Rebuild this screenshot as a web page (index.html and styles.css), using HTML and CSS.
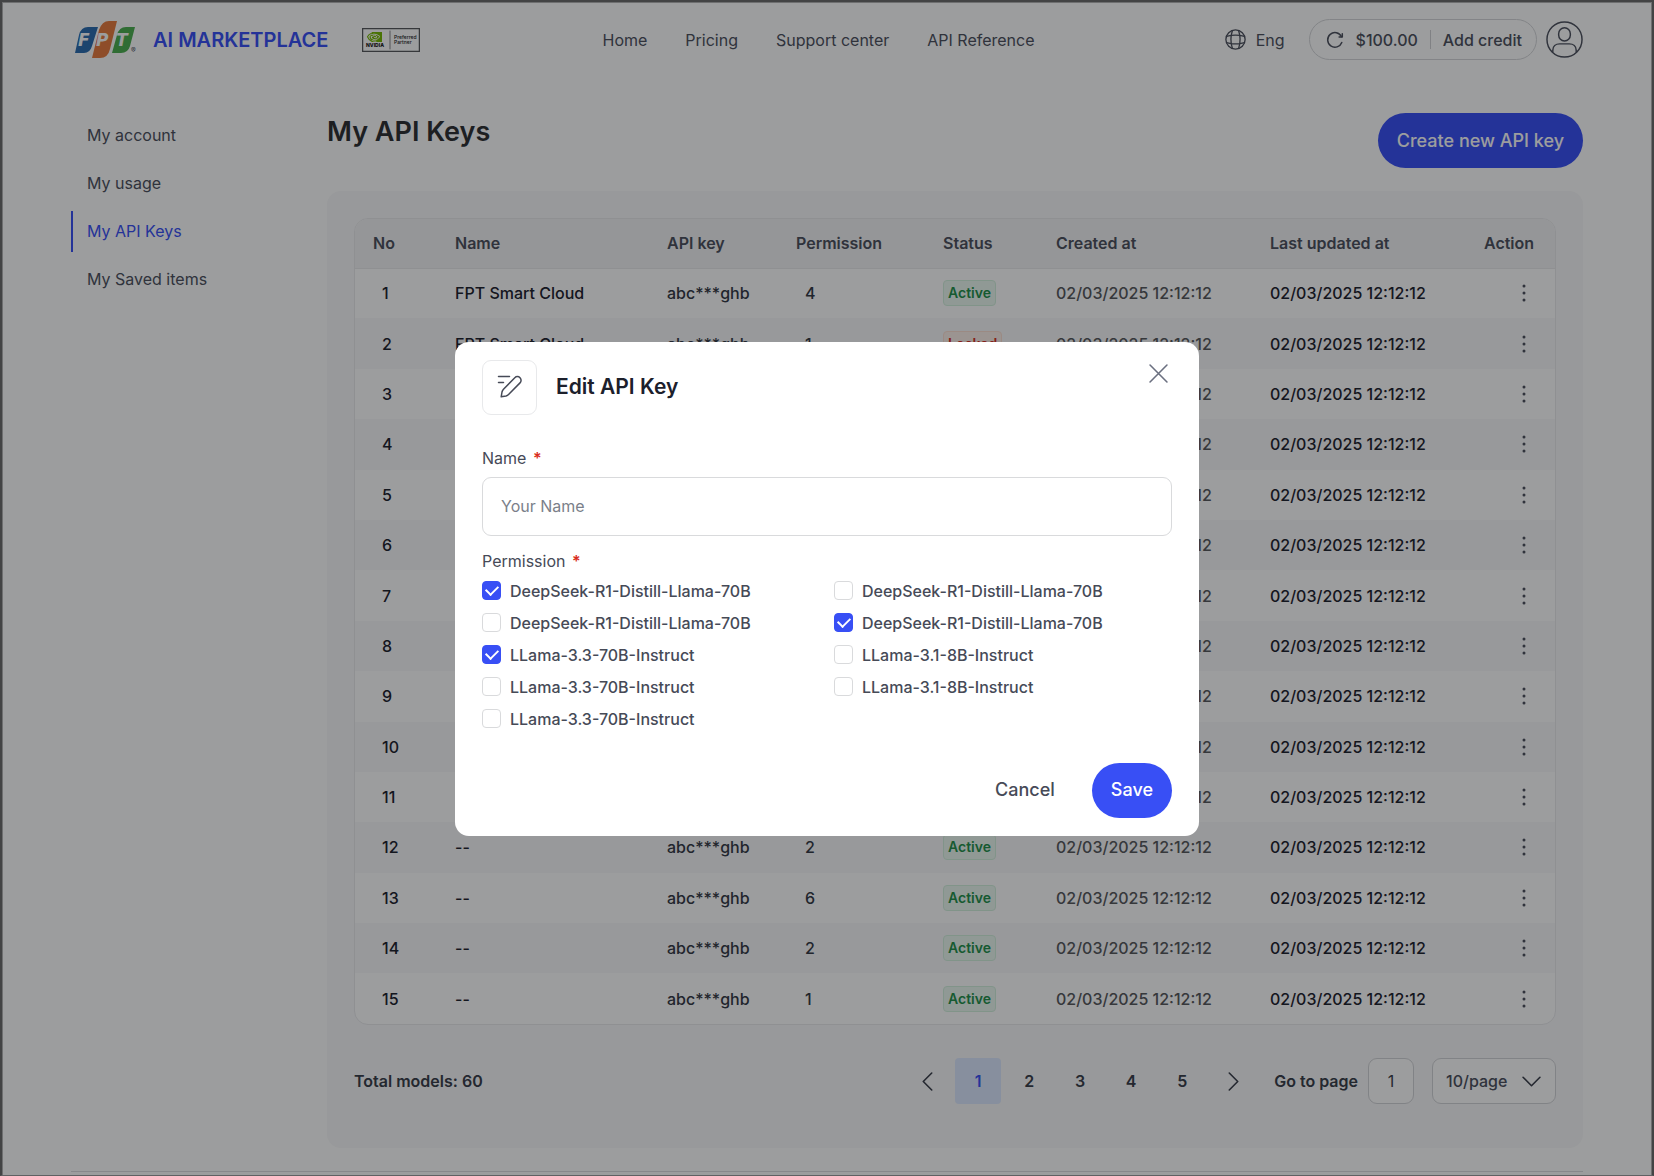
FILE: index.html
```html
<!DOCTYPE html>
<html lang="en">
<head>
<meta charset="utf-8">
<meta name="viewport" content="width=device-width, initial-scale=1">
<title>My API Keys</title>
<link rel="stylesheet" href="styles.css">
</head>
<body>
<div class="page">
  <header class="topbar">
    <div class="brand">
      <svg class="logo" viewBox="0 0 64 38" role="img" aria-label="FPT">
        <path fill="#2a6cb0" d="M0 32 4 14Q6 6 13 6H23L17 25Q15 32 9 32Z"/>
        <path fill="#4bb04f" d="M37 32 42 14Q44 6 51 6H60L55 25Q53 32 46 32Z"/>
        <path fill="#e87a3c" d="M17 37 24 9Q27 0 34 0H42L35 28Q33 37 25 37Z"/>
        <text class="logo-letter" x="3" y="25">F</text>
        <text class="logo-letter" x="21" y="25">P</text>
        <text class="logo-letter" x="41" y="25">T</text>
        <text class="logo-mark" x="56" y="32">®</text>
      </svg>
      <span class="brand-name">AI MARKETPLACE</span>
      <svg class="partner" viewBox="0 0 58 24" role="img" aria-label="NVIDIA Preferred Partner">
        <rect x=".5" y=".5" width="57" height="23" fill="none" stroke="#55575a"/>
        <path fill="#76b900" d="M10 4h10v10H10z"/>
        <path fill="none" stroke="#fff" stroke-width=".9" d="M6 8.800Q12 3.500 18 8.500Q13 14.500 9 9.500Q13 5.500 15 9Q12.500 11 12 9.200M6 8.800Q9 13.500 14 13.200"/>
        <path fill="none" stroke="#76b900" stroke-width="1.100" d="M10 5Q6.500 6.500 5.500 8.800Q7 12.500 10 13.500M10 7Q8 8 8 9Q8.500 11 10 12"/>
        <text class="partner-name" x="4" y="19">NVIDIA</text>
        <path stroke="#55575a" stroke-width=".7" d="M28 3v18"/>
        <text class="partner-text" x="32" y="11">Preferred</text>
        <text class="partner-text" x="32" y="16">Partner</text>
      </svg>
    </div>
    <nav class="nav" aria-label="Main">
      <a href="#home">Home</a>
      <a href="#pricing">Pricing</a>
      <a href="#support">Support center</a>
      <a href="#reference">API Reference</a>
    </nav>
    <div class="tools">
      <button class="lang" type="button">
        <svg viewBox="0 0 24 24" class="icon-globe" aria-hidden="true"><circle cx="12" cy="12" r="11"/><path d="M8.500 1.800c-2.300 6.600-2.300 13.800 0 20.400M15.500 1.800c2.300 6.600 2.300 13.800 0 20.400M1.800 15.500c6.600 2 13.800 2 20.400 0M1.800 8.500c6.600-2 13.800-2 20.400 0"/></svg>
        Eng
      </button>
      <div class="credit">
        <svg viewBox="0 0 18 18" class="icon-refresh" aria-hidden="true"><path d="M15.800 11.500A7.300 7.300 0 1 1 15.500 5.600"/><path d="M16.300 2.800v3.200h-3.200"/></svg>
        <span>$100.00</span>
        <span class="divider"></span>
        <a href="#credit">Add credit</a>
      </div>
      <button class="avatar" type="button" aria-label="Account">
        <svg viewBox="0 0 38 38" aria-hidden="true"><circle cx="19" cy="19" r="18"/><rect x="13" y="7" width="12" height="13.500" rx="6"/><path d="M7 31.500V30c0-4 3-6.500 7-6.500h10c4 0 7 2.500 7 6.500v1.500"/></svg>
      </button>
    </div>
  </header>

  <div class="layout">
    <nav class="sidebar" aria-label="Account">
      <a href="#account">My account</a>
      <a href="#usage">My usage</a>
      <a class="current" href="#keys" aria-current="page">My API Keys</a>
      <a href="#saved">My Saved items</a>
    </nav>
    <main class="content">
      <div class="heading">
        <h1>My API Keys</h1>
        <button class="btn btn-primary" type="button">Create new API key</button>
      </div>
      <section class="panel">
        <div class="table-wrap">
          <table>
            <colgroup><col class="c-no"><col><col class="c-key"><col class="c-perm"><col class="c-status"><col class="c-date"><col class="c-date"><col class="c-action"></colgroup>
            <thead>
              <tr><th>No</th><th>Name</th><th>API key</th><th>Permission</th><th>Status</th><th>Created at</th><th>Last updated at</th><th>Action</th></tr>
            </thead>
            <tbody id="rows"></tbody>
          </table>
        </div>
        <div class="pager">
          <span class="total">Total models: 60</span>
          <div class="pages">
            <button type="button" aria-label="Previous page"><svg viewBox="0 0 10 18" class="icon-side" aria-hidden="true"><path d="M9 1 1 9l8 8"/></svg></button>
            <button type="button" class="on" aria-current="page">1</button>
            <button type="button">2</button>
            <button type="button">3</button>
            <button type="button">4</button>
            <button type="button">5</button>
            <button type="button" aria-label="Next page"><svg viewBox="0 0 10 18" class="icon-side" aria-hidden="true"><path d="m1 1 8 8-8 8"/></svg></button>
          </div>
          <label class="total" for="goto">Go to page</label>
          <input id="goto" class="goto" type="text" value="1">
          <div class="size">
            <select aria-label="Rows per page"><option>10/page</option><option>20/page</option></select>
            <svg viewBox="0 0 18 10" class="icon-down" aria-hidden="true"><path d="m1 1 8 8 8-8"/></svg>
          </div>
        </div>
      </section>
    </main>
  </div>
  <hr class="rule">
</div>

<div class="overlay">
  <form class="modal" role="dialog" aria-modal="true" aria-labelledby="modal-title">
    <div class="modal-head">
      <span class="modal-icon"><svg viewBox="0 0 26 24" aria-hidden="true"><path d="M1.500 1.500h11M1.500 7.500h5"/><path d="M4.200 21.800 5 17Q5.300 15.500 6.500 14.200L17.800 2.700a3.500 3.500 0 0 1 5.200 5.200L11.800 19.200Q10.500 20.600 9 21Z"/></svg></span>
      <h2 id="modal-title">Edit API Key</h2>
      <button class="close" type="button" aria-label="Close"><svg viewBox="0 0 18 18" aria-hidden="true"><path d="m1 1 16 16M17 1 1 17"/></svg></button>
    </div>
    <label class="label" for="name">Name <span class="req">*</span></label>
    <input id="name" class="field" type="text" placeholder="Your Name">
    <fieldset class="perms">
      <legend class="label">Permission <span class="req">*</span></legend>
      <div class="options">
        <label><input type="checkbox" checked>DeepSeek-R1-Distill-Llama-70B</label>
        <label><input type="checkbox">DeepSeek-R1-Distill-Llama-70B</label>
        <label><input type="checkbox">DeepSeek-R1-Distill-Llama-70B</label>
        <label><input type="checkbox" checked>DeepSeek-R1-Distill-Llama-70B</label>
        <label><input type="checkbox" checked>LLama-3.3-70B-Instruct</label>
        <label><input type="checkbox">LLama-3.1-8B-Instruct</label>
        <label><input type="checkbox">LLama-3.3-70B-Instruct</label>
        <label><input type="checkbox">LLama-3.1-8B-Instruct</label>
        <label><input type="checkbox">LLama-3.3-70B-Instruct</label>
      </div>
    </fieldset>
    <div class="actions">
      <button class="btn btn-text" type="button">Cancel</button>
      <button class="btn btn-primary" type="submit">Save</button>
    </div>
  </form>
</div>
<script src="app.js"></script>
</body>
</html>
```

FILE: styles.css
```css
* {
  box-sizing: border-box;
}

body {
  margin: 0;
  background: #fff;
  color: #4b4f5c;
  font: 16px/24px Inter, "Liberation Sans", sans-serif;
}

button,
input,
select {
  font: inherit;
  color: inherit;
}

button {
  padding: 0;
  border: 0;
  background: none;
  cursor: pointer;
}

a {
  color: inherit;
  text-decoration: none;
}

h1,
h2 {
  margin: 0;
  font-weight: 600;
}

svg {
  display: block;
  fill: none;
  stroke: currentColor;
  stroke-width: 1.5;
  stroke-linecap: round;
  stroke-linejoin: round;
}

.page {
  padding: 0 71px;
}

/* Top bar */
.topbar {
  display: flex;
  align-items: center;
  justify-content: space-between;
  padding: 19px 0 18px 4px;
}

.brand {
  display: flex;
  align-items: center;
}

.logo {
  width: 64px;
  height: 38px;
  stroke: none;
}

.logo-letter {
  fill: #fff;
  font: italic 700 17px "DejaVu Sans", sans-serif;
}

.logo-mark {
  fill: #4b4f5c;
  font: 7px Inter, sans-serif;
}

.brand-name {
  margin: 0 34px 0 14px;
  color: #384ff5;
  font-size: 20px;
  font-weight: 600;
}

.partner {
  width: 58px;
  height: 24px;
  stroke: none;
}

.partner-name {
  fill: #111;
  font: 800 5px Inter, sans-serif;
}

.partner-text {
  fill: #222;
  font: 500 5px Inter, sans-serif;
}

.nav {
  display: flex;
  gap: 38px;
  margin-right: 8px;
}

.tools {
  display: flex;
  align-items: center;
}

.lang {
  display: flex;
  align-items: center;
  gap: 10px;
  margin-right: 24px;
}

.icon-globe {
  width: 21px;
  height: 21px;
}

.credit {
  display: flex;
  align-items: center;
  gap: 12px;
  height: 41px;
  margin-right: 9px;
  padding: 0 14px 0 16px;
  border: 1px solid #d5d6d9;
  border-radius: 21px;
  font-weight: 500;
}

.icon-refresh {
  width: 18px;
  height: 18px;
}

.divider {
  width: 1px;
  height: 19px;
  background: #d0d1d4;
}

.avatar svg {
  width: 37px;
  height: 37px;
}

/* Page body */
.layout {
  display: grid;
  grid-template-columns: 256px minmax(0, 1fr);
  padding-top: 35px;
}

.sidebar {
  display: flex;
  flex-direction: column;
  gap: 7px;
  padding-top: 2px;
}

.sidebar a {
  padding: 8px 0 9px 14px;
  border-left: 2px solid transparent;
}

.sidebar .current {
  border-color: #384ff5;
  color: #384ff5;
}

.heading {
  display: flex;
  justify-content: space-between;
  margin-bottom: 23px;
}

h1 {
  color: #2c2e31;
  font-size: 27px;
  line-height: 38px;
}

.btn {
  height: 55px;
  padding: 0 19px;
  border-radius: 28px;
  font-size: 18px;
  font-weight: 500;
}

.btn-primary {
  background: #384ff5;
  color: #fff;
}

.panel {
  padding: 27px 27px 44px;
  border-radius: 14px;
  background: #f9f9fa;
}

.table-wrap {
  overflow: hidden;
  border: 1px solid #e9e9ec;
  border-radius: 14px;
  background: #fff;
}

table {
  width: 100%;
  height: 805px;
  border-collapse: collapse;
  table-layout: fixed;
}

.c-no {
  width: 82px;
}

.c-key {
  width: 129px;
}

.c-perm {
  width: 147px;
}

.c-status {
  width: 113px;
}

.c-date {
  width: 214px;
}

.c-action {
  width: 89px;
}

thead tr {
  height: 49px;
  background: #f4f4f5;
}

th,
td {
  padding: 0 18px;
  text-align: left;
}

th {
  border-bottom: 1px solid #e9e9ec;
  font-weight: 600;
}

tbody tr:nth-child(even) {
  background: #f9f9fa;
}

td {
  height: 50px;
  color: #1c202c;
  font-weight: 500;
}

td:nth-child(1),
td:nth-child(4) {
  padding-left: 27px;
}

td:nth-child(3),
td:nth-child(4) {
  color: #333743;
}

td:nth-child(6) {
  color: #55575b;
}

.badge {
  display: inline-block;
  padding: 0 4px;
  border: 1px solid #d3f0dd;
  border-radius: 4px;
  background: #ecf9f1;
  color: #22904a;
  font-size: 14px;
  font-weight: 600;
}

.badge.locked {
  border-color: #fde0d2;
  background: #fef0ea;
  color: #d92d20;
}

.more {
  display: block;
  margin-left: auto;
}

.more svg {
  width: 26px;
  height: 20px;
  fill: #4b4f5c;
  stroke: none;
}

.pager {
  display: flex;
  align-items: center;
  margin-top: 33px;
  color: #383c48;
}

.total {
  font-weight: 600;
}

.pages {
  display: flex;
  gap: 5px;
  margin: 0 18px 0 auto;
}

.pages button {
  display: grid;
  place-items: center;
  width: 46px;
  height: 46px;
  border-radius: 4px;
  font-weight: 600;
}

.pages .on {
  background: #dce8ff;
  color: #384ff5;
}

.icon-side {
  width: 11px;
  height: 19px;
}

.goto {
  width: 46px;
  height: 46px;
  margin: 0 18px 0 10px;
  padding: 0;
  border: 1px solid #d3d4d8;
  border-radius: 9px;
  background: #fff;
  text-align: center;
}

.size {
  display: grid;
  align-items: center;
  width: 124px;
}

.size > * {
  grid-area: 1 / 1;
}

.size select {
  height: 46px;
  padding: 0 13px;
  border: 1px solid #d3d4d8;
  border-radius: 9px;
  background: #fff;
  color: #4b4f5c;
  font-weight: 500;
  appearance: none;
}

.icon-down {
  width: 19px;
  height: 11px;
  margin-right: 15px;
  justify-self: end;
  pointer-events: none;
}

.rule {
  height: 1px;
  margin: 23px 0 4px;
  border: 0;
  background: #dcdde0;
}

/* Dialog */
.overlay {
  position: fixed;
  inset: 0;
  display: grid;
  place-items: center;
  border: 2px solid #434445;
  border-bottom: 1px solid #606163;
  background: rgba(8, 10, 12, 0.4);
  box-shadow: inset 1px 1px #6e6f70, inset -1px 0 #6e6f70;
}

.modal {
  width: 744px;
  max-width: 100%;
  padding: 18px 27px;
  border-radius: 14px;
  background: #fff;
  color: #464a57;
}

.modal-head {
  display: flex;
  align-items: center;
  gap: 19px;
  margin-bottom: 31px;
}

.modal-icon {
  display: grid;
  place-items: center;
  width: 55px;
  height: 55px;
  border: 1px solid #e8e9eb;
  border-radius: 9px;
}

.modal-icon svg {
  width: 26px;
  height: 24px;
}

h2 {
  color: #1c202c;
  font-size: 21px;
  line-height: 28px;
}

.close {
  align-self: flex-start;
  margin: 4px 4px 0 auto;
}

.close svg {
  width: 19px;
  height: 19px;
  color: #6b7080;
}

.label {
  display: block;
  padding: 0;
}

.req {
  margin-left: 2px;
  color: #d92d20;
  font-weight: 600;
}

.field {
  display: block;
  width: 100%;
  height: 59px;
  margin: 7px 0 13px;
  padding: 0 18px;
  border: 1px solid #d9dadc;
  border-radius: 9px;
}

.field::placeholder {
  color: #7b7f8a;
  opacity: 1;
}

.perms {
  margin: 0;
  padding: 0;
  border: 0;
}

.options {
  display: grid;
  grid-template-columns: 1fr 1fr;
  gap: 8px 14px;
  padding-top: 6px;
}

.options label {
  display: flex;
  align-items: center;
  gap: 9px;
  font-weight: 500;
}

.options input {
  display: grid;
  place-items: center;
  width: 19px;
  height: 19px;
  margin: 0;
  border: 1px solid #d9dadc;
  border-radius: 4px;
  background: #fff;
  appearance: none;
}

.options input:checked {
  border-color: #384ff5;
  background: #384ff5;
}

.options input:checked::before {
  content: "";
  width: 10px;
  height: 6px;
  margin-bottom: 3px;
  border: solid #fff;
  border-width: 0 0 2px 2px;
  transform: rotate(-45deg);
}

.actions {
  display: flex;
  justify-content: flex-end;
  gap: 18px;
  margin-top: 32px;
}
```

FILE: app.js
```javascript
const keys = [
  ["FPT Smart Cloud", 4, "Active"],
  ["FPT Smart Cloud", 1, "Locked"],
  ["--", 2, "Active"],
  ["--", 2, "Active"],
  ["--", 2, "Active"],
  ["--", 2, "Active"],
  ["--", 2, "Active"],
  ["--", 2, "Active"],
  ["--", 2, "Active"],
  ["--", 2, "Active"],
  ["--", 2, "Active"],
  ["--", 2, "Active"],
  ["--", 6, "Active"],
  ["--", 2, "Active"],
  ["--", 1, "Active"],
];

const stamp = "02/03/2025 12:12:12";

document.getElementById("rows").innerHTML = keys
  .map(
    ([name, permission, status], i) => `<tr>
      <td>${i + 1}</td>
      <td>${name}</td>
      <td>abc***ghb</td>
      <td>${permission}</td>
      <td><span class="badge ${status.toLowerCase()}">${status}</span></td>
      <td>${stamp}</td>
      <td>${stamp}</td>
      <td><button class="more" type="button" aria-label="Actions for key ${i + 1}">
        <svg viewBox="0 0 26 20" aria-hidden="true"><circle cx="13" cy="3" r="1.500"/><circle cx="13" cy="10" r="1.500"/><circle cx="13" cy="17" r="1.500"/></svg>
      </button></td>
    </tr>`
  )
  .join("");
```
